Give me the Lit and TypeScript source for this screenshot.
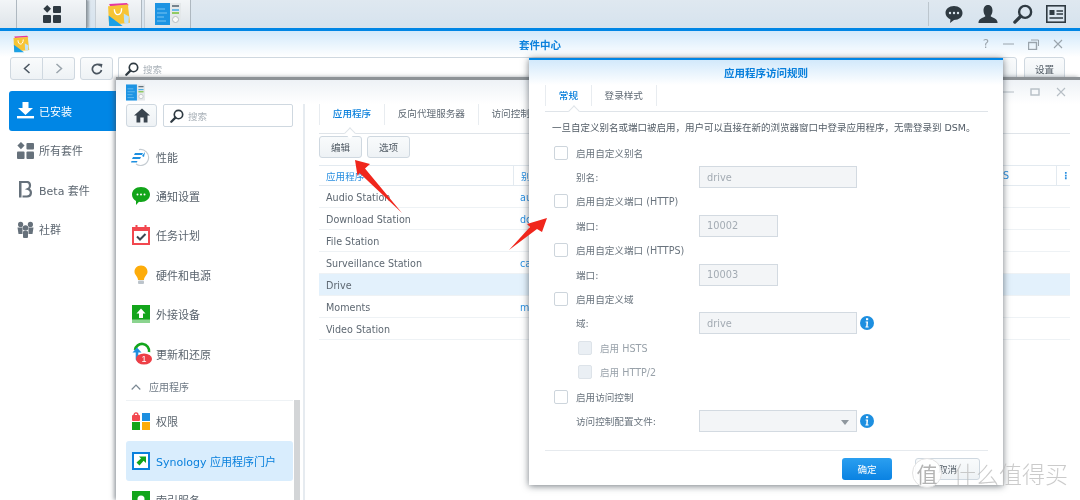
import { LitElement, html, css } from "lit";
import { customElement } from "lit/decorators.js";

const bag = (s: number) => html`<svg width=${s} height=${s} viewBox="0 0 24 24">
  <path d="M3 2 L20 1 L22 3 L4 4Z" fill="#e6379f"/>
  <path d="M2 4 L21 2.5 L23 20 L3 22Z" fill="#f7c435"/>
  <path d="M2.5 13 L16 23 L3 23Z" fill="#19a0e6"/>
  <path d="M8 7 C8 14 15 14 15 6" fill="none" stroke="#fff" stroke-width="1.3"/>
  <path d="M17 11 L22 14 L21.5 21 L17.5 20Z" fill="#bfe3f7"/>
</svg>`;
const panel = (w: number, h: number) => html`<svg width=${w} height=${h} viewBox="0 0 26 22">
  <rect x="0" y="0" width="15" height="22" fill="#1d94e3"/>
  <rect x="15" y="0" width="11" height="22" fill="#e4e8ea"/>
  <path d="M2 6h8M2 10h10M2 14h7M2 18h9" stroke="#7cc5f2" stroke-width="1"/>
  <path d="M17 3h7" stroke="#5a6a76" stroke-width="1.6"/><path d="M17 7h7" stroke="#4bb0e8" stroke-width="1.6"/>
  <path d="M17 10h7" stroke="#7dc242" stroke-width="1.6"/><circle cx="20.5" cy="16.5" r="3" fill="#fafafa" stroke="#b8bec2"/>
</svg>`;
const grid = (s: number, c: string) => html`<svg width=${s} height=${s} viewBox="0 0 18 18" fill=${c}>
  <path d="M4.2 0 L8 3.8 L4.2 7.8 L.4 3.8Z"/><rect x="10" y="1" width="8" height="7" rx="1"/>
  <rect x="0" y="10" width="8" height="8" rx="1"/><rect x="10" y="10" width="8" height="8" rx="1"/></svg>`;
const lens = (s: number, c = "#2f3a42") => html`<svg width=${s} height=${s} viewBox="0 0 16 16"><circle cx="9.7" cy="6.3" r="4.8" fill="none" stroke=${c} stroke-width="1.9"/><path d="M6.2 9.8 L1.5 14.5" stroke=${c} stroke-width="2.6" stroke-linecap="round"/></svg>`;

const sideIcons: Record<string, unknown> = {
  perf: html`<svg width="20" height="20" viewBox="0 0 20 20"><path d="M8 2.6 A8 8 0 1 1 5 17" fill="none" stroke="#c5ccd2" stroke-width="1.2"/><path d="M4 6h8l-1 2H3ZM2 10h8l-1 2H1ZM0.5 14h6l-.7 1.5H0Z" fill="#1d8fe0"/><path d="M14 5 l-1 5 -2-1z" fill="#1d8fe0"/></svg>`,
  msg: html`<svg width="20" height="20" viewBox="0 0 20 20"><path d="M10 1 C15.5 1 19 4.5 19 8.5 C19 12.8 15 16 10 16 C9.3 16 8.8 16 8 15.8 L5 19 L5 15 C2.5 13.6 1 11.3 1 8.5 C1 4.5 4.5 1 10 1Z" fill="#12a51a"/><circle cx="6.5" cy="8.5" r="1" fill="#fff"/><circle cx="10" cy="8.5" r="1" fill="#fff"/><circle cx="13.5" cy="8.5" r="1" fill="#fff"/></svg>`,
  cal: html`<svg width="18" height="20" viewBox="0 0 18 20"><rect x="1" y="3" width="16" height="16" fill="#fff" stroke="#f2474f" stroke-width="2"/><rect x="0" y="2" width="18" height="4" fill="#f2474f"/><rect x="3.5" y="0" width="2" height="4" fill="#f2474f"/><rect x="12.5" y="0" width="2" height="4" fill="#f2474f"/><path d="M5 11.5 L8 14.5 L13.5 9" fill="none" stroke="#3c4650" stroke-width="2"/></svg>`,
  bulb: html`<svg width="16" height="20" viewBox="0 0 16 20"><path d="M8 0.5 C12.5 .5 14.5 3.6 14.5 6.8 C14.5 10 11 11.5 11 15 L5 15 C5 11.5 1.5 10 1.5 6.8 C1.5 3.6 3.5 .5 8 .5Z" fill="#fdac0a"/><rect x="5" y="15.5" width="6" height="3.5" rx="1" fill="#bcc4cb"/></svg>`,
  up: html`<svg width="18" height="18" viewBox="0 0 18 18"><rect width="18" height="18" fill="#13a51b"/><rect y="14.5" width="18" height="3.5" fill="#8bd48f"/><path d="M9 3.5 L13.5 8.5 H11 V13 H7 V8.5 H4.5Z" fill="#fff"/></svg>`,
  upd: html`<svg width="24" height="20" viewBox="0 0 24 20" style="overflow:visible"><path d="M6 6 A7 7 0 0 1 20 8" fill="none" stroke="#13a51b" stroke-width="2.6"/><path d="M8 7 V15 A5 5 0 0 0 14 17" fill="none" stroke="#1d8fe0" stroke-width="2.6"/><path d="M8 3.5 L12.5 8.5 H3.5Z" fill="#1d8fe0"/><ellipse cx="15" cy="15" rx="8" ry="5.6" fill="#ee3f46"/><text x="15" y="18.2" fill="#fff" font-size="9" text-anchor="middle" font-family="Liberation Sans">1</text></svg>`,
  perm: html`<svg width="18" height="18" viewBox="0 0 18 18"><rect x="0" y="3" width="8" height="6" rx="1" fill="#f2474f"/><path d="M2 3.5 A2 2.6 0 0 1 6 3.5" fill="none" stroke="#f2474f" stroke-width="1.4"/><rect x="10" y="1" width="8" height="8" fill="#1d8fe0"/><rect x="0" y="10" width="8" height="8" fill="#13a51b"/><rect x="10" y="10" width="8" height="8" fill="#fdac0a"/></svg>`,
  portal: html`<svg width="18" height="18" viewBox="0 0 18 18"><rect x="1" y="1" width="16" height="16" fill="#fff" stroke="#0a80dc" stroke-width="2"/><path d="M7 4.5 H14 V11 L11.6 8.8 L7.5 13.5 L4.5 10.5 L9 6.6Z" fill="#13a51b"/></svg>`,
  idx: html`<svg width="18" height="18" viewBox="0 0 18 18"><path d="M0 0H18V18H0Z" fill="#13a51b"/><circle cx="9" cy="8" r="3.5" fill="#fff"/></svg>`,
};
const sideItems = [
  ["perf", "性能"], ["msg", "通知设置"], ["cal", "任务计划"], ["bulb", "硬件和电源"], ["up", "外接设备"], ["upd", "更新和还原"],
];
const rows = [
  ["Audio Station", "audio"], ["Download Station", "download"], ["File Station", ""], ["Surveillance Station", "cam"], ["Drive", ""], ["Moments", "moments"], ["Video Station", ""],
];
const info = html`<svg class="info" width="14" height="14" viewBox="0 0 14 14"><circle cx="7" cy="7" r="7" fill="#1d8fe0"/><rect x="6" y="2.2" width="2.2" height="2" fill="#fff"/><path d="M5.6 5.6 H8.1 L7.6 10.6 H8.6 V11.5 H5.4 V10.6 H6.2 L6.5 6.5 H5.6Z" fill="#fff"/></svg>`;

@customElement("app-root")
export class AppRoot extends LitElement {
  static styles = css`
    :host { display: block; width: 1080px; height: 500px; position: relative; overflow: hidden; background: #fff;
      font-family: "DejaVu Sans", "Noto Sans CJK SC", sans-serif; font-size: 9.6px; color: #525c66; filter: blur(0.35px); }
    svg { display: block; flex: none; }
    .taskbar { height: 28px; display: flex; background: linear-gradient(#dfe8f0, #d6e3ee); }
    .tb { height: 28px; background: linear-gradient(#f2f5f7, #dfe5ea); border-right: 1px solid #aeb8c0; display: flex; align-items: center; justify-content: center; box-sizing: border-box; }
    .tb.edge { width: 17px; }
    .tb.home-tb { width: 70px; border-right: 1px solid #8d969d; margin-right: 8px; box-shadow: 2px 0 2px #9aa4ac; }
    .tb.app { width: 47px; border-left: 1px solid #c6ced5; margin-right: 2px; }
    .tb-right { margin-left: auto; display: flex; align-items: center; height: 28px; padding-right: 14px; gap: 13.5px; }
    .tb-sep { width: 1px; height: 24px; background: #bcc6ce; margin-right: 1.5px; }
    .pkg { position: absolute; left: 0; top: 28px; width: 1080px; height: 472px; border-top: 3px solid #0086e5; box-sizing: border-box; background: #fff; }
    .titlebar { height: 26px; position: relative; background: linear-gradient(#d2e9fb, #fff); display: flex; align-items: center; padding: 0 17px 0 12px; }
    .title { position: absolute; left: 0; right: 0; text-align: center; color: #0a80dc; font-weight: 700; font-size: 10.5px; }
    .ctrls { margin-left: auto; display: flex; align-items: center; gap: 14px; }
    .q { font-size: 12px; width: 12px; text-align: right; }
    .toolbar { display: flex; gap: 5px; padding: 0 15px 0 10px; height: 23px; align-items: stretch; }
    .btn { border: 1px solid #cfd8e0; border-radius: 3px; background: linear-gradient(#f9fbfc, #eef2f5); display: flex; align-items: center; justify-content: center; box-sizing: border-box; color: #525c66; }
    .seg { display: flex; width: 65px; }
    .seg .btn:first-child { flex: 1; border-radius: 3px 0 0 3px; }
    .seg .btn:last-child { flex: 1; border-left: 0; border-radius: 0 3px 3px 0; }
    .search { display: flex; align-items: center; gap: 4px; padding-left: 6px; border: 1px solid #cfd8e0; background: #fff; box-sizing: border-box; color: #a9b1b8; border-radius: 2px; }
    .nav { padding: 11px 0 0 9px; width: 108px; }
    .nav-item { height: 39.5px; display: flex; align-items: center; gap: 5px; padding-left: 8px; font-size: 11px; color: #5c6670; }
    .nav-item.on { background: #0086e5; color: #fff; border-radius: 3px 0 0 3px; }
    .nav-item svg { width: 17px; }
    .inner { position: absolute; left: 116px; top: 77px; width: 964px; height: 423px; border-top: 3px solid #8d9296; background: #fff; box-sizing: border-box; box-shadow: -2px 0 4px rgba(60,70,80,.5); display: flex; flex-direction: column; }
    .in-title { height: 24px; display: flex; align-items: center; padding: 0 14px 0 10px; background: linear-gradient(#eef2f6, #fff); }
    .in-body { display: flex; flex: 1; min-height: 0; }
    .side { width: 189px; flex: none; padding-left: 10px; box-sizing: border-box; border-right: 2px solid #e6ebf0; overflow: hidden; }
    .side-top { display: flex; gap: 6px; height: 23px; margin-bottom: 10px; width: 167px; }
    .home { width: 31px; }
    .side .search { width: 130px; }
    .s-item { height: 39.4px; width: 167px; display: flex; align-items: center; gap: 5px; font-size: 11px; padding-left: 4px; box-sizing: border-box; color: #5a646e; white-space: nowrap; }
    .s-ico { width: 21px; display: flex; justify-content: center; flex: none; }
    .s-item.on { background: #d9edfd; color: #0a80dc; border-radius: 3px; height: 40px; }
    .s-head { height: 28px; width: 167px; display: flex; align-items: center; gap: 8px; padding-left: 5px; box-sizing: border-box; border-bottom: 1px solid #eef2f5; color: #6f7a85; font-size: 10px; margin-bottom: 0; }
    .scroll { position: absolute; left: 178px; top: 320px; width: 6px; height: 110px; background: #d3d5d7; }
    .content { flex: 1; padding: 0 10px 0 14px; min-width: 0; }
    .tabs { display: flex; height: 29px; border-bottom: 1px solid #dfe4e9; align-items: stretch; position: relative; }
    .tab { display: flex; align-items: center; padding: 0 12.8px 3px; border-left: 1px solid #e8ecf0; height: 21px; box-sizing: border-box; color: #606a74; font-size: 9.6px; white-space: nowrap; }
    .tab.on { color: #0a80dc; font-weight: 500; }
    .tabs .notch { position: absolute; width: 7px; height: 7px; background: #fff; border-left: 1px solid #dfe4e9; border-top: 1px solid #dfe4e9; transform: rotate(45deg); bottom: -4px; }
    .actions { display: flex; gap: 5px; margin: 2px 0 7px; height: 22px; }
    .actions .btn { width: 43px; padding-bottom: 1px; }
    .tbl { display: grid; grid-template-columns: 194px 1fr 100px 14px; }
    .th { height: 21px; display: flex; align-items: center; padding-left: 7px; border-top: 1px solid #e3eaf0; border-bottom: 1px solid #e3eaf0; color: #2a8fe0; box-sizing: border-box; }
    .th + .th { border-left: 1px solid #e3eaf0; }
    .td { height: 22px; display: flex; align-items: center; padding: 1px 0 0 7px; border-bottom: 1px solid #eef2f5; box-sizing: border-box; color: #5e6872; white-space: nowrap; }
    .td.hl { background: #e3f1fc; }
    .td.al { color: #2a8fe0; }
    .th.r { justify-content: flex-end; padding-right: 47px; padding-left: 0; }
    .dlg { position: absolute; left: 529px; top: 58px; width: 474px; height: 427px; background: #fff; border-top: 2px solid #0086e5; box-sizing: border-box; box-shadow: 0 1px 7px rgba(40,50,60,.65); display: flex; flex-direction: column; }
    .d-title { height: 25px; flex: none; background: linear-gradient(#d2e9fb, #fff); display: flex; align-items: center; justify-content: center; color: #0a80dc; font-weight: 700; font-size: 10.5px; }
    .d-body { padding: 0 15px 0 16px; flex: 1; display: flex; flex-direction: column; }
    .d-body .tabs { height: 26px; }
    .d-body .tab { padding-bottom: 2px; }
    .note { height: 26.5px; display: flex; align-items: center; padding-left: 7px; font-size: 9.5px; color: #525c66; white-space: nowrap; margin-top: 2px; }
    .row { height: 24.4px; display: flex; align-items: center; color: #6a747e; flex: none; white-space: nowrap; }
    .cb { width: 14px; height: 14px; border: 1px solid #cdd5dc; background: #fff; border-radius: 2px; box-sizing: border-box; flex: none; }
    .row.ck { padding-left: 9px; gap: 8px; }
    .row.sub { padding-left: 33px; gap: 8px; color: #99a2aa; }
    .row.sub .cb { background: #eaeff4; border-color: #dde3e9; }
    .row.fld { padding-left: 31px; }
    .lbl { width: 123px; flex: none; white-space: nowrap; }
    .inp { height: 22px; background: #f3f5f7; border: 1px solid #d3dae1; box-sizing: border-box; display: flex; align-items: center; padding-left: 7px; color: #a3abb3; font-size: 9.8px; position: relative; }
    .inp.w { width: 158px; } .inp.n { width: 79px; }
    .info { margin-left: 3px; }
    .caret { position: absolute; right: 7px; top: 9px; width: 0; height: 0; border-left: 4px solid transparent; border-right: 4px solid transparent; border-top: 5px solid #8f979e; }
    .foot { margin-top: auto; border-top: 1px solid #e6eaee; height: 35px; display: flex; gap: 23px; padding: 7px 0 0 297px; box-sizing: border-box; }
    .ok { width: 50px; height: 22px; border-radius: 3px; background: linear-gradient(#2b9ff0, #0a82e2); color: #fff; display: flex; align-items: center; justify-content: center; }
    .cancel { width: 65px; height: 22px; }
    .over { position: absolute; inset: 0; pointer-events: none; }
    .wm { position: absolute; left: 912px; top: 458px; display: flex; align-items: center; gap: 11px; font-family: "Noto Sans CJK SC", sans-serif; }
    .wm-c { width: 30px; height: 30px; border-radius: 50%; background: rgba(255,255,255,.9); border: 1px solid #e2e2e2; box-sizing: border-box; display: flex; align-items: center; justify-content: center; color: #b3b3b3; font-size: 21px; }
    .wm-t { font-size: 23px; color: rgba(185,185,185,.75); white-space: nowrap; font-weight: 300; line-height: 28px; }
  `;

  winCtl(c: string) {
    return html`<svg width="10" height="10" viewBox="0 0 10 10"><path d="M1 1 L9 9 M9 1 L1 9" stroke=${c} stroke-width="1.1"/></svg>`;
  }

  render() {
    return html`
      <div class="taskbar">
        <div class="tb edge"></div>
        <div class="tb home-tb">${grid(18, "#2f3a42")}</div>
        <div class="tb app">${bag(25)}</div>
        <div class="tb app">${panel(26, 22)}</div>
        <div class="tb-right">
          <div class="tb-sep"></div>
          <svg width="20" height="20" viewBox="0 0 20 20"><path d="M10 2 C15 2 18.5 5 18.5 9 C18.5 13 15 16 10 16 L6 19 L6.5 15.4 C3.5 14 1.5 11.8 1.5 9 C1.5 5 5 2 10 2Z" fill="#2f3a42"/><circle cx="6" cy="9" r="1.2" fill="#dbe6ef"/><circle cx="10" cy="9" r="1.2" fill="#dbe6ef"/><circle cx="14" cy="9" r="1.2" fill="#dbe6ef"/></svg>
          <svg width="22" height="20" viewBox="0 0 22 20"><path d="M11 1 C14.2 1 15.5 3.5 15.5 6.5 C15.5 9 14.4 11 13.6 12 C14 13.6 20 14 20.5 18 L20.5 19 L1.5 19 L1.5 18 C2 14 8 13.6 8.4 12 C7.6 11 6.5 9 6.5 6.5 C6.5 3.5 7.8 1 11 1Z" fill="#2f3a42"/></svg>
          ${lens(20)}
          <svg width="20" height="18" viewBox="0 0 20 18"><rect x=".8" y=".8" width="18.4" height="16.4" fill="none" stroke="#2f3a42" stroke-width="1.6"/><rect x="3.5" y="5" width="5" height="5" fill="#2f3a42"/><path d="M10.5 6h6.5M10.5 9h6.5M3.5 13h13.5" stroke="#2f3a42" stroke-width="1.4"/></svg>
        </div>
      </div>

      <div class="pkg">
        <div class="titlebar">
          ${bag(18)}
          <div class="title">套件中心</div>
          <div class="ctrls" style="color:#9aa4ac">
            <span class="q">?</span>
            <svg width="11" height="10" viewBox="0 0 11 10"><path d="M0 5 H11" stroke="#9aa4ac"/></svg>
            <svg width="11" height="11" viewBox="0 0 11 11" fill="none" stroke="#9aa4ac"><rect x=".5" y="3.5" width="8" height="7" stroke-width="1.4"/><path d="M3 1 H10.5 V7"/></svg>
            ${this.winCtl("#9aa4ac")}
          </div>
        </div>
        <div class="toolbar">
          <div class="seg">
            <div class="btn"><svg width="8" height="11" viewBox="0 0 8 11"><path d="M6.5 1 L1.5 5.5 L6.5 10" fill="none" stroke="#4a5560" stroke-width="1.5"/></svg></div>
            <div class="btn"><svg width="8" height="11" viewBox="0 0 8 11"><path d="M1.5 1 L6.5 5.5 L1.5 10" fill="none" stroke="#9aa4ac" stroke-width="1.5"/></svg></div>
          </div>
          <div class="btn" style="width:33px"><svg width="12" height="12" viewBox="0 0 12 12"><path d="M10.5 7 A4.6 4.6 0 1 1 9 2.6" fill="none" stroke="#4a5560" stroke-width="1.7"/><path d="M7.5 0.5 L11.5 1 L10.5 5Z" fill="#4a5560"/></svg></div>
          <div class="search" style="flex:1;border-right:0">${lens(14)}<span>搜索</span></div>
          <div class="btn" style="width:70px;margin-left:-40px;position:relative">手动安装</div>
          <div class="btn" style="width:41px;margin-left:2px">设置</div>
        </div>
        <div class="nav">
          <div class="nav-item on"><svg width="17" height="17" viewBox="0 0 17 17"><path d="M5.5 0 H11.5 V6 H16 L8.5 13 L1 6 H5.5Z" fill="#fff"/><rect x="0" y="14" width="17" height="2.4" fill="#fff"/></svg>已安装</div>
          <div class="nav-item">${grid(17, "#66717b")}所有套件</div>
          <div class="nav-item"><svg width="17" height="17" viewBox="0 0 17 17"><path d="M2 1 H10 C13.5 1 14 6.5 11 8 C15 9 15 15.5 10 15.5 H5.5" fill="none" stroke="#66717b" stroke-width="2.2"/><rect x="2" y="1" width="2.5" height="15.5" fill="#66717b"/></svg>Beta 套件</div>
          <div class="nav-item"><svg width="17" height="17" viewBox="0 0 17 17" fill="#66717b"><circle cx="3.6" cy="3.4" r="2.6"/><circle cx="13.4" cy="3.4" r="2.6"/><path d="M.5 6.5 H5.5 V13 H1.5Z M11.5 6.5 H16.5 L15.5 13 H11.5Z"/><circle cx="8.5" cy="7" r="2.8"/><rect x="6" y="10" width="5" height="7" rx="1"/></svg>社群</div>
        </div>
      </div>

      <div class="inner">
        <div class="in-title">
          ${panel(19, 17)}
          <div class="ctrls" style="gap:16px">
            <svg width="11" height="10" viewBox="0 0 11 10"><path d="M0 5 H11" stroke="#b6bec5"/></svg>
            <svg width="10" height="10" viewBox="0 0 10 10"><rect x="1" y="2" width="8" height="6" fill="none" stroke="#b6bec5" stroke-width="1.4"/></svg>
            ${this.winCtl("#b6bec5")}
          </div>
        </div>
        <div class="in-body">
          <div class="side">
            <div class="side-top">
              <div class="btn home"><svg width="16" height="15" viewBox="0 0 16 15"><path d="M8 .5 L16 7.5 H13.5 V14.5 H9.7 V9.5 H6.3 V14.5 H2.5 V7.5 H0Z" fill="#3a454f"/></svg></div>
              <div class="search">${lens(14)}<span>搜索</span></div>
            </div>
            ${sideItems.map(([k, t]) => html`<div class="s-item"><div class="s-ico">${sideIcons[k]}</div>${t}</div>`)}
            <div class="s-head"><svg width="10" height="6" viewBox="0 0 10 6"><path d="M.7 5.5 L5 1 L9.3 5.5" fill="none" stroke="#7a8792" stroke-width="1.2"/></svg>应用程序</div>
            <div class="s-item"><div class="s-ico">${sideIcons.perm}</div>权限</div>
            <div class="s-item on"><div class="s-ico">${sideIcons.portal}</div>Synology 应用程序门户</div>
            <div class="s-item"><div class="s-ico">${sideIcons.idx}</div>索引服务</div>
          </div>
          <div class="content">
            <div class="tabs">
              <div class="tab on">应用程序</div><div class="tab">反向代理服务器</div><div class="tab">访问控制配置文件</div><div class="tab">证书</div>
              <div class="notch" style="left:27px"></div>
            </div>
            <div class="actions"><div class="btn">编辑</div><div class="btn">选项</div></div>
            <div class="tbl">
              <div class="th">应用程序</div><div class="th">别名</div><div class="th r">HTTPS</div><div class="th" style="padding:0 0 0 4px;font-weight:700">⋮</div>
              ${rows.map(([n, a], i) => {
                const h = i === 4 ? "hl" : "";
                return html`<div class="td ${h}">${n}</div><div class="td al ${h}">${a}</div><div class="td ${h}"></div><div class="td ${h}"></div>`;
              })}
            </div>
          </div>
        </div>
        <div class="scroll"></div>
      </div>

      <div class="dlg">
        <div class="d-title">应用程序访问规则</div>
        <div class="d-body">
          <div class="tabs">
            <div class="tab on">常规</div><div class="tab" style="border-right:1px solid #e8ecf0">登录样式</div>
            <div class="notch" style="left:25px"></div>
          </div>
          <div class="note">一旦自定义别名或端口被启用，用户可以直接在新的浏览器窗口中登录应用程序，无需登录到 DSM。</div>
          <div class="row ck"><div class="cb"></div>启用自定义别名</div>
          <div class="row fld"><div class="lbl">别名:</div><div class="inp w">drive</div></div>
          <div class="row ck"><div class="cb"></div>启用自定义端口 (HTTP)</div>
          <div class="row fld"><div class="lbl">端口:</div><div class="inp n">10002</div></div>
          <div class="row ck"><div class="cb"></div>启用自定义端口 (HTTPS)</div>
          <div class="row fld"><div class="lbl">端口:</div><div class="inp n">10003</div></div>
          <div class="row ck"><div class="cb"></div>启用自定义域</div>
          <div class="row fld"><div class="lbl">域:</div><div class="inp w">drive</div>${info}</div>
          <div class="row sub"><div class="cb"></div>启用 HSTS</div>
          <div class="row sub"><div class="cb"></div>启用 HTTP/2</div>
          <div class="row ck"><div class="cb"></div>启用访问控制</div>
          <div class="row fld"><div class="lbl">访问控制配置文件:</div><div class="inp w"><div class="caret"></div></div>${info}</div>
          <div class="foot"><div class="ok">确定</div><div class="btn cancel">取消</div></div>
        </div>
      </div>

      <svg class="over" width="1080" height="500" viewBox="0 0 1080 500">
        <path d="M355 160 L370 164 L365 168.5 L402 213 L359.5 173 L357.5 176Z" fill="#f0261c"/>
        <path d="M547 218 L542 232 L537 229 L509 250 L530 227 L527 224Z" fill="#f0261c"/>
      </svg>
      <div class="wm"><div class="wm-c">值</div><div class="wm-t">什么值得买</div></div>
    `;
  }
}
